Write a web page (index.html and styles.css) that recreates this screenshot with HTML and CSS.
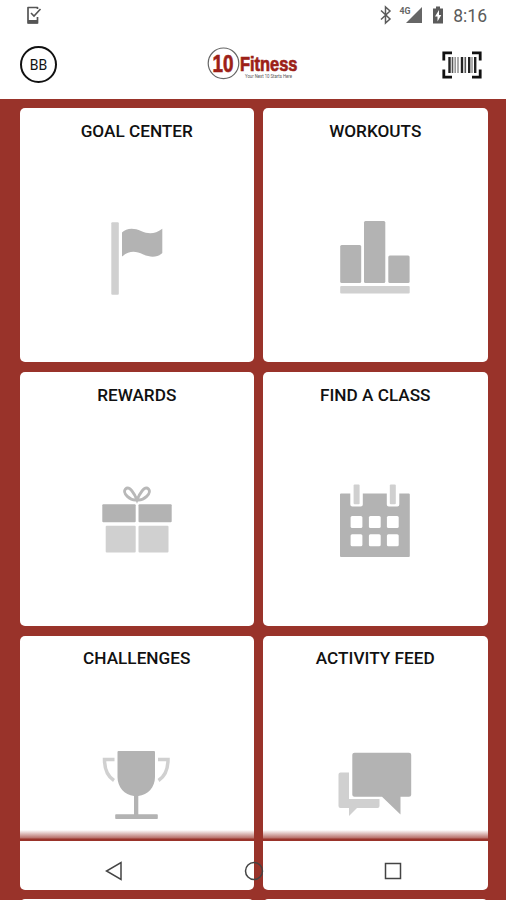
FILE: index.html
```html
<!DOCTYPE html>
<html lang="en">
<head>
    <meta charset="UTF-8">
    <meta name="viewport" content="width=device-width, initial-scale=1.0">
    <title>10 Fitness</title>
    <link rel="stylesheet" href="styles.css">
</head>
<body>
    <div class="status-bar">
        <svg class="task-icon" width="16" height="20" viewBox="0 0 16 20">
            <path d="M11.500 4V2.500H2v15.500h9.500v-6" fill="none" stroke="#555" stroke-width="1.700" stroke-linejoin="round"/>
            <path d="M2 15h9.500v3.500H2z" fill="#555"/>
            <path d="M5 8l3 3 6.500-7" fill="none" stroke="#555" stroke-width="1.600"/>
        </svg>
        <div class="status-icons">
            <svg width="14" height="20" viewBox="0 0 14 20">
                <path d="M2 5.500l9 8.500-4.500 4V2L11 6l-9 8.500" fill="none" stroke="#5b5b5b" stroke-width="1.500"/>
            </svg>
            <svg width="24" height="20" viewBox="0 0 24 20">
                <path d="M23 2v16H7z" fill="#666"/>
                <text x="0.500" y="9" class="network" textLength="11" lengthAdjust="spacingAndGlyphs">4G</text>
            </svg>
            <svg width="12" height="20" viewBox="0 0 12 20">
                <path d="M1 3.500h3V1.500h4v2h3V18.500H1z" fill="#5b5b5b"/>
                <path d="M7 5l-4 6.500h2.500V16.500L9.300 10H7z" fill="#fff"/>
            </svg>
            <span class="time">8:16</span>
        </div>
    </div>

    <div class="header">
        <div class="avatar">BB</div>
        <svg class="logo" width="96" height="36" viewBox="0 0 96 36">
            <circle cx="16.500" cy="17.300" r="15.300" fill="#fff" stroke="#666" stroke-width="1.200"/>
            <text x="5.500" y="25.500" class="logo-ten" textLength="21" lengthAdjust="spacingAndGlyphs">10</text>
            <text x="33" y="24.500" class="logo-name" textLength="57.500" lengthAdjust="spacingAndGlyphs">Fitness</text>
            <text x="38" y="31.500" class="logo-tag" textLength="47" lengthAdjust="spacingAndGlyphs">Your Next 10 Starts Here</text>
        </svg>
        <svg class="barcode" width="40" height="28" viewBox="0 0 40 28">
            <path d="M1.800 9.500V1.800H10M30 1.800h8.200v7.700M38.200 18.500v7.700H30M10 26.200H1.800v-7.700" fill="none" stroke="#111" stroke-width="2.800"/>
            <path d="M7.500 6v16M20 6v16M27.200 6v16M33.200 6v16" stroke="#222" stroke-width="2.400"/>
            <path d="M10.500 6v16M23.300 6v16" stroke="#555" stroke-width="1.600"/>
            <path d="M13.200 6v16M16 6v16M30 6v16" stroke="#999" stroke-width="1.600"/>
        </svg>
    </div>

    <div class="grid">
        <div class="card">
            <h2>GOAL CENTER</h2>
            <svg class="icon" viewBox="0 0 80 80">
                <rect class="light" x="14.300" y="4.300" width="7.500" height="72.500" rx="1"/>
                <path class="dark" d="M25 14.500C29 10 37 9.500 44 13c8 3.500 14 3 21.300-2.300V35c-4 4-11 5-19 1.500-8-4-14-4-21.300 2z"/>
            </svg>
        </div>
        <div class="card">
            <h2>WORKOUTS</h2>
            <svg class="icon" viewBox="0 0 80 80">
                <rect class="dark" x="5.200" y="27" width="21" height="38" rx="1.500"/>
                <rect class="dark" x="29" y="2.900" width="21.300" height="62.200" rx="1.500"/>
                <rect class="dark" x="53.300" y="37.500" width="21.300" height="27.500" rx="1.500"/>
                <rect class="light" x="5.200" y="68" width="69.500" height="7.400" rx="1"/>
            </svg>
        </div>
        <div class="card">
            <h2>REWARDS</h2>
            <svg class="icon" viewBox="0 0 80 80">
                <path class="bow" d="M40 18C33 19 25 11 28.500 7c4-4 9 5 11.500 11 2.500-6 7.500-15 11.500-11C55 11 47 19 40 18z"/>
                <rect class="dark" x="5.300" y="22.200" width="33.400" height="18" rx="1"/>
                <rect class="dark" x="41.500" y="22.200" width="33.200" height="18" rx="1"/>
                <rect class="light" x="8.700" y="43.700" width="30" height="26.700" rx="1"/>
                <rect class="light" x="41.500" y="43.700" width="30" height="26.700" rx="1"/>
            </svg>
        </div>
        <div class="card">
            <h2>FIND A CLASS</h2>
            <svg class="icon" viewBox="0 0 80 80">
                <path class="dark" d="M6 11.500h9.300v11q0 2 2 2h8.500q2 0 2-2v-11h24v11q0 2 2 2h8.500q2 0 2-2v-11h9.500q1 0 1 1V74q0 1-1 1H6q-1 0-1-1V12.500q0-1 1-1z"/>
                <rect class="light" x="18.600" y="2.500" width="6" height="19.700" rx="1"/>
                <rect class="light" x="54.800" y="2.500" width="6" height="19.700" rx="1"/>
                <g fill="#fff">
                    <rect x="15.600" y="34" width="11.800" height="12" rx="1.500"/>
                    <rect x="33.900" y="34" width="11.800" height="12" rx="1.500"/>
                    <rect x="51.900" y="34" width="11.800" height="12" rx="1.500"/>
                    <rect x="15.600" y="52.300" width="11.800" height="12" rx="1.500"/>
                    <rect x="33.900" y="52.300" width="11.800" height="12" rx="1.500"/>
                    <rect x="51.900" y="52.300" width="11.800" height="12" rx="1.500"/>
                </g>
            </svg>
        </div>
        <div class="card">
            <h2>CHALLENGES</h2>
            <svg class="icon" viewBox="0 0 80 80">
                <path class="handle" d="M17.500 13.500H7.500C7.500 23 10 30 17 34.500M61 13.500h10C71 23 68.500 30 61.500 34.500"/>
                <path class="dark" d="M21.500 5H57q1 0 1 1v25c0 10-7 18-16.700 19v18.300H60q.8 0 .8.800v3.200q0 .8-.8.800H19q-.8 0-.8-.800v-3.200q0-.8.800-.800h18V50C27.500 49 20.500 41 20.500 31V6q0-1 1-1z"/>
            </svg>
        </div>
        <div class="card">
            <h2>ACTIVITY FEED</h2>
            <svg class="icon" viewBox="0 0 80 80">
                <path class="light" d="M5.500 26.500H14V53h30.500v7q0 2-2 2H22l-8 8v-8H5.500q-2 0-2-2V28.500q0-2 2-2z"/>
                <path class="dark" d="M19.500 6.800h54.500q2.200 0 2.200 2V48.700q0 2-2.200 2h-8.500V68.500L47 50.700H19.500q-2.200 0-2.200-2V8.800q0-2 2.200-2z"/>
            </svg>
        </div>
        <div class="card"></div>
        <div class="card"></div>
    </div>

    <!-- Android navigation, drawn over the cards -->
    <div class="nav-bar">
        <svg width="18" height="20" viewBox="0 0 18 20">
            <path d="M16 1.500v17L1.500 10z"/>
        </svg>
        <svg width="20" height="20" viewBox="0 0 20 20">
            <circle cx="10" cy="10" r="8.500"/>
        </svg>
        <svg width="18" height="20" viewBox="0 0 18 20">
            <rect x="1.500" y="2.500" width="15" height="15"/>
        </svg>
    </div>
</body>
</html>
```
FILE: styles.css
```css
* {
    box-sizing: border-box;
}
html {
    overflow: hidden;
}
body {
    margin: 0;
    height: 900px;
    overflow: hidden;
    position: relative;
    display: flex;
    flex-direction: column;
    background-color: #99332a;
    font-family: Roboto, sans-serif;
    color: #111;
}
.status-bar {
    height: 30px;
    flex-shrink: 0;
    padding: 5px 19px 0 26px;
    background-color: #fff;
    display: flex;
    justify-content: space-between;
}
.status-icons {
    display: flex;
    gap: 9px;
}
.status-icons svg:first-child {
    margin-right: -3px;
}
.network {
    font-size: 9px;
    font-weight: bold;
    fill: #666;
}
.time {
    font-size: 17.5px;
    line-height: 22px;
    color: #5b5b5b;
}
.header {
    height: 69px;
    flex-shrink: 0;
    padding: 0 24px 0 20px;
    background-color: #fff;
    display: flex;
    align-items: center;
    justify-content: space-between;
}
.avatar {
    width: 37px;
    height: 37px;
    border: 2px solid #111;
    border-radius: 50%;
    font-size: 14px;
    line-height: 34px;
    text-align: center;
}
.logo {
    margin: 0 0 1px 11px;
    overflow: visible;
}
.logo-ten, .logo-name {
    font-family: "Liberation Sans", sans-serif;
    font-weight: bold;
    fill: #9c1f18;
    stroke: #9c1f18;
    stroke-width: 0.7;
}
.logo-ten {
    font-size: 24px;
}
.logo-name {
    font-size: 20px;
}
.logo-tag {
    font-size: 4.5px;
    fill: #555;
}
.grid {
    flex: 1;
    min-height: 0;
    overflow: hidden;
    padding: 9.45px 18.5px 0 20px;
    display: grid;
    grid-template-columns: 233.5px 224.5px;
    grid-auto-rows: 254px;
    gap: 9.65px 9.5px;
}
.card {
    background-color: #fff;
    border-radius: 5px;
    display: flex;
    flex-direction: column;
    align-items: center;
}
.card h2 {
    margin: 12.5px 0 77.5px;
    font-size: 17.2px;
    font-weight: 500;
    line-height: 20px;
}
.icon {
    width: 80px;
    height: 80px;
}
.dark {
    fill: #b3b3b3;
}
.light {
    fill: #d0d0d0;
}
.bow, .handle {
    fill: none;
    stroke: #b8b8b8;
    stroke-width: 2.8;
}
.handle {
    stroke: #d0d0d0;
    stroke-width: 3.5;
}
.nav-bar {
    position: absolute;
    left: 0;
    right: 0;
    bottom: 0;
    height: 70px;
    padding: 31px 104px 0 105px;
    display: flex;
    justify-content: space-between;
    background: linear-gradient(rgba(153, 51, 42, 0), rgba(153, 51, 42, 0.7) 8px, #99332a 9px, #99332a 11px, transparent 11px);
}
.nav-bar svg {
    fill: none;
    stroke: #444;
    stroke-width: 1.5;
}
```
